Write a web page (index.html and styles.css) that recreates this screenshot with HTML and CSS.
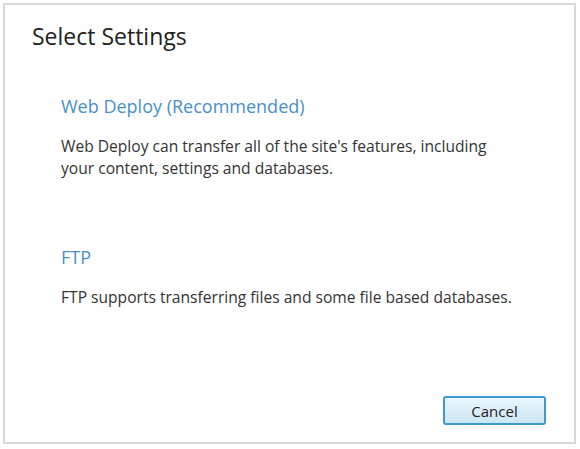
FILE: index.html
```html
<!DOCTYPE html>
<html>
<head>
<meta charset="utf-8">
<link rel="stylesheet" href="styles.css">
</head>
<body>
<div class="dialog">
  <h1 class="title">Select Settings</h1>
  <div class="options">
    <div class="option">
      <a class="option-title">Web Deploy (Recommended)</a>
      <p class="option-desc">Web Deploy can transfer all of the site's features, including your content, settings and databases.</p>
    </div>
    <div class="option">
      <a class="option-title">FTP</a>
      <p class="option-desc">FTP supports transferring files and some file based databases.</p>
    </div>
  </div>
  <div class="footer">
    <button class="btn">Cancel</button>
  </div>
</div>
</body>
</html>
```
FILE: styles.css
```css
html, body {
  margin: 0;
  padding: 0;
  background: #ffffff;
}
body {
  width: 580px;
  height: 449px;
  padding: 3px 0 0 3px;
  box-sizing: border-box;
  font-family: "Open Sans", "Noto Sans", sans-serif;
}
.dialog {
  width: 573px;
  height: 441px;
  box-sizing: border-box;
  border: 2px solid #d9d9d9;
  background: #fff;
  display: flex;
  flex-direction: column;
  padding: 15px 0 0 27px;
}
.title {
  margin: 0;
  font-size: 23px;
  font-weight: 400;
  color: #222;
  line-height: 32px;
}
.options {
  padding-left: 29px;
  display: flex;
  flex-direction: column;
  gap: 66px;
  margin-top: 42px;
}
.option-title {
  display: block;
  font-size: 18px;
  color: #4a8fc4;
  line-height: 24px;
}
.option-desc {
  margin: 17px 0 0;
  font-size: 15.6px;
  color: #333;
  line-height: 22px;
  width: 462px;
}
.footer {
  margin-top: auto;
  display: flex;
  justify-content: flex-end;
  padding: 0 28px 17px 0;
}
.btn {
  width: 103px;
  height: 29px;
  border: 2px solid #3d9ad1;
  border-radius: 3px;
  background: linear-gradient(#eaf6fc, #cde6f4);
  font-family: "Open Sans", "Noto Sans", sans-serif;
  font-size: 15px;
  color: #222;
  padding: 0;
}
```
